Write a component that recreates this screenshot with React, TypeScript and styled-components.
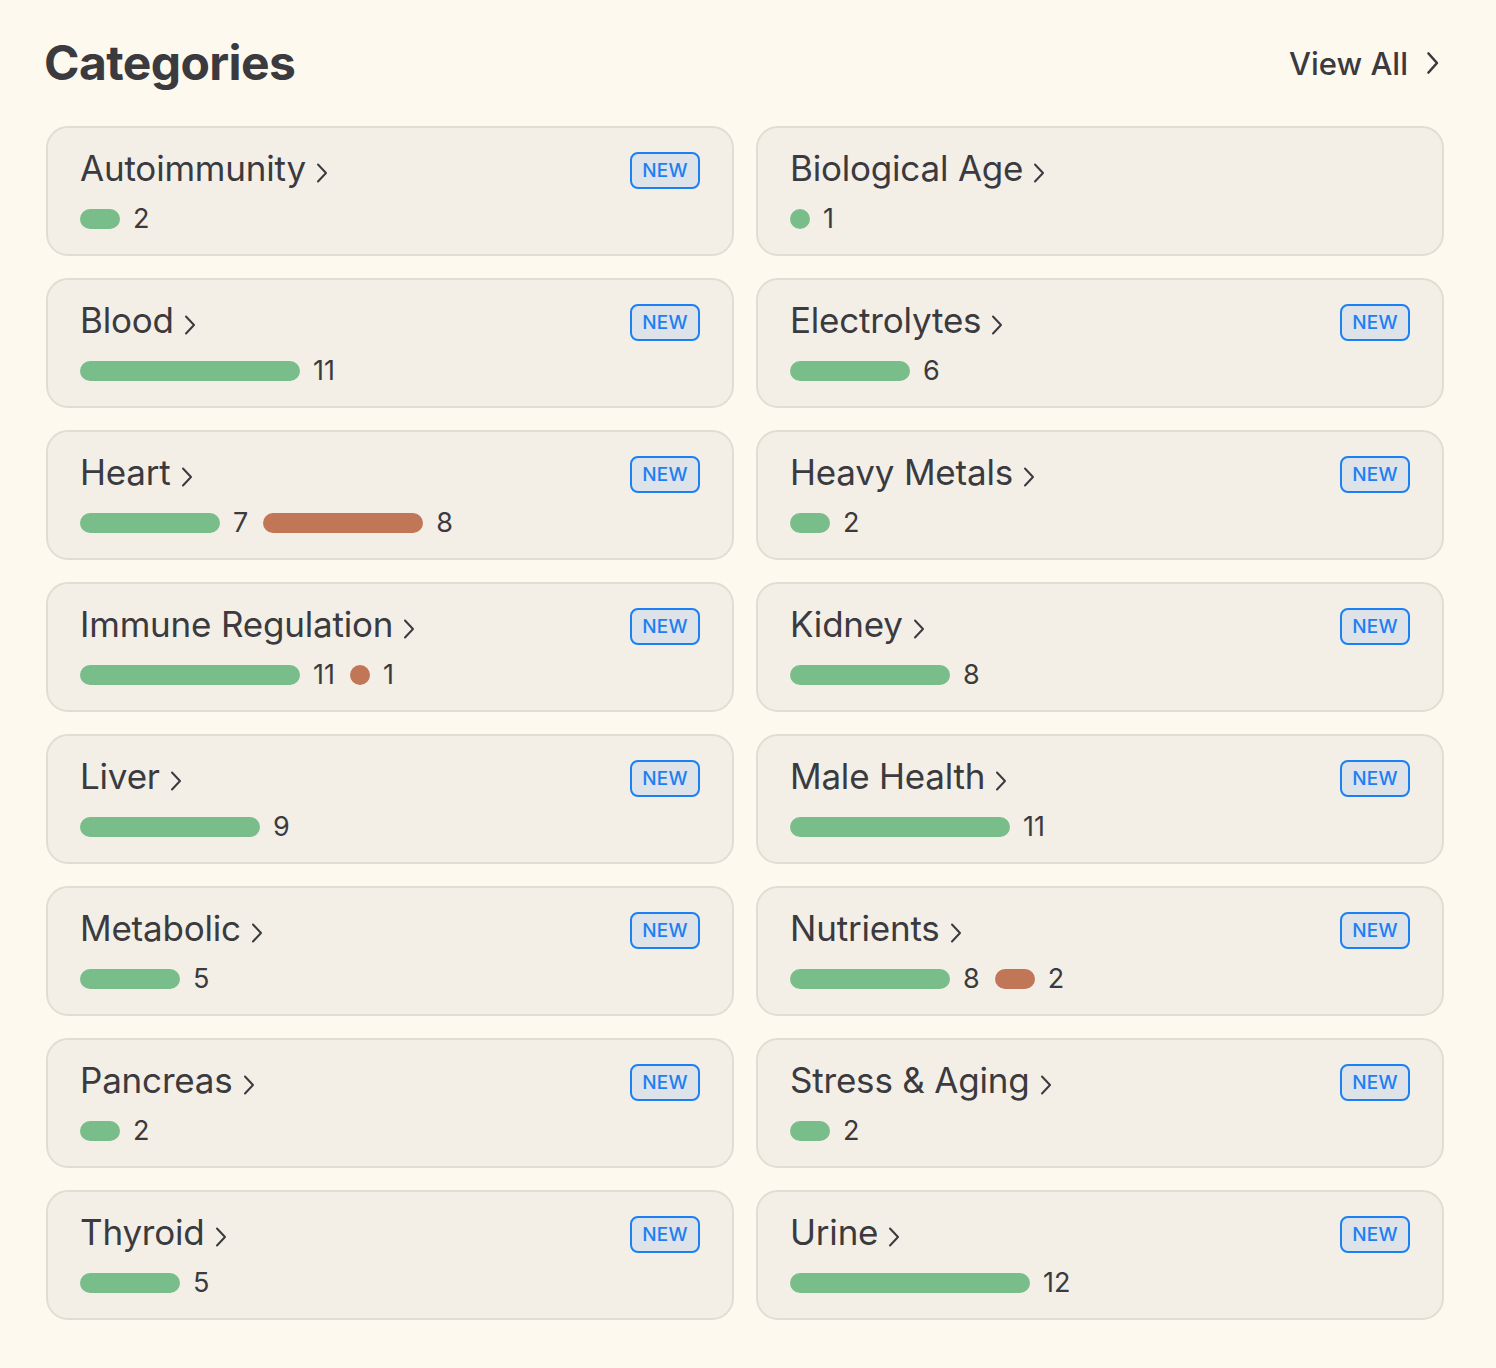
import React from "react";
import styled, { createGlobalStyle } from "styled-components";

const GlobalStyle = createGlobalStyle`
  html, body {
    margin: 0;
    padding: 0;
    background: #fdf9ee;
  }
  body {
    font-family: Inter, "Noto Sans", "Liberation Sans", sans-serif;
    color: #3a3a3f;
    -webkit-font-smoothing: antialiased;
  }
`;

const Page = styled.div`
  padding: 30px 52px 40px 46px;
`;

const Header = styled.header`
  display: flex;
  align-items: center;
  justify-content: space-between;
  height: 66px;
  margin-bottom: 30px;
`;

const Title = styled.h1`
  margin: 0 0 0 -2px;
  font-size: 48px;
  font-weight: 700;
  letter-spacing: -0.6px;
  color: #3a3a3f;
  line-height: 1;
`;

const ViewAll = styled.a`
  display: flex;
  align-items: center;
  gap: 18px;
  font-size: 31px;
  font-weight: 500;
  color: #3a3a3f;
  text-decoration: none;
  cursor: pointer;
  margin-right: 4px;
`;

const Grid = styled.div`
  display: grid;
  grid-template-columns: 1fr 1fr;
  column-gap: 22px;
  row-gap: 22px;
`;

const Card = styled.div`
  background: #f3efe7;
  border: 2px solid #e2ddd2;
  border-radius: 22px;
  padding: 19px 32px 20px 32px;
  height: 130px;
  box-sizing: border-box;
  display: flex;
  flex-direction: column;
  gap: 15px;
  cursor: pointer;
`;

const TopRow = styled.div`
  display: flex;
  align-items: flex-start;
  justify-content: space-between;
`;

const Name = styled.div`
  display: flex;
  align-items: center;
  gap: 10px;
  font-size: 35px;
  font-weight: 400;
  line-height: 43px;
  color: #3a3a3f;
  letter-spacing: -0.2px;
`;

const Chevron = styled.svg`
  flex: none;
  margin-top: 8px;
`;

const Badge = styled.span`
  margin-top: 5px;
  display: inline-flex;
  align-items: center;
  justify-content: center;
  width: 70px;
  height: 37px;
  box-sizing: border-box;
  border: 2px solid #1b80f2;
  border-radius: 8px;
  background: #dee2e9;
  color: #1b80f2;
  font-size: 19px;
  font-weight: 500;
  letter-spacing: 0.2px;
`;

const Stats = styled.div`
  display: flex;
  align-items: center;
  gap: 13px;
  height: 28px;
`;

const Bar = styled.span<{ $tone: "good" | "bad" }>`
  display: block;
  height: 20px;
  border-radius: 10px;
  background: ${(p) => (p.$tone === "good" ? "#79bd8b" : "#c17757")};
`;

const Count = styled.span`
  font-size: 27px;
  line-height: 28px;
  color: #3a3a3f;
  margin-right: 2px;
`;

type Seg = { n: number; tone: "good" | "bad" };
type Cat = { name: string; isNew: boolean; segs: Seg[] };

const g = (n: number): Seg => ({ n, tone: "good" });
const b = (n: number): Seg => ({ n, tone: "bad" });

const categories: Cat[] = [
  { name: "Autoimmunity", isNew: true, segs: [g(2)] },
  { name: "Biological Age", isNew: false, segs: [g(1)] },
  { name: "Blood", isNew: true, segs: [g(11)] },
  { name: "Electrolytes", isNew: true, segs: [g(6)] },
  { name: "Heart", isNew: true, segs: [g(7), b(8)] },
  { name: "Heavy Metals", isNew: true, segs: [g(2)] },
  { name: "Immune Regulation", isNew: true, segs: [g(11), b(1)] },
  { name: "Kidney", isNew: true, segs: [g(8)] },
  { name: "Liver", isNew: true, segs: [g(9)] },
  { name: "Male Health", isNew: true, segs: [g(11)] },
  { name: "Metabolic", isNew: true, segs: [g(5)] },
  { name: "Nutrients", isNew: true, segs: [g(8), b(2)] },
  { name: "Pancreas", isNew: true, segs: [g(2)] },
  { name: "Stress & Aging", isNew: true, segs: [g(2)] },
  { name: "Thyroid", isNew: true, segs: [g(5)] },
  { name: "Urine", isNew: true, segs: [g(12)] },
];

const SmallChevron = () => (
  <Chevron width="12" height="22" viewBox="0 0 12 22" fill="none">
    <path d="M2 2.5 L10 11 L2 19.5" stroke="#3a3a3f" strokeWidth="2" strokeLinecap="round" strokeLinejoin="round" />
  </Chevron>
);

export default function App() {
  return (
    <>
      <GlobalStyle />
      <Page>
        <Header>
          <Title>Categories</Title>
          <ViewAll>
            View All
            <svg width="14" height="24" viewBox="0 0 14 24" fill="none">
              <path d="M2.5 2.5 L11 12 L2.5 21.5" stroke="#3a3a3f" strokeWidth="2.6" strokeLinecap="round" strokeLinejoin="round" />
            </svg>
          </ViewAll>
        </Header>
        <Grid>
          {categories.map((c) => (
            <Card key={c.name}>
              <TopRow>
                <Name>
                  {c.name}
                  <SmallChevron />
                </Name>
                {c.isNew && <Badge>NEW</Badge>}
              </TopRow>
              <Stats>
                {c.segs.map((s, i) => (
                  <React.Fragment key={i}>
                    <Bar $tone={s.tone} style={{ width: s.n * 20 }} />
                    <Count>{s.n}</Count>
                  </React.Fragment>
                ))}
              </Stats>
            </Card>
          ))}
        </Grid>
      </Page>
    </>
  );
}
